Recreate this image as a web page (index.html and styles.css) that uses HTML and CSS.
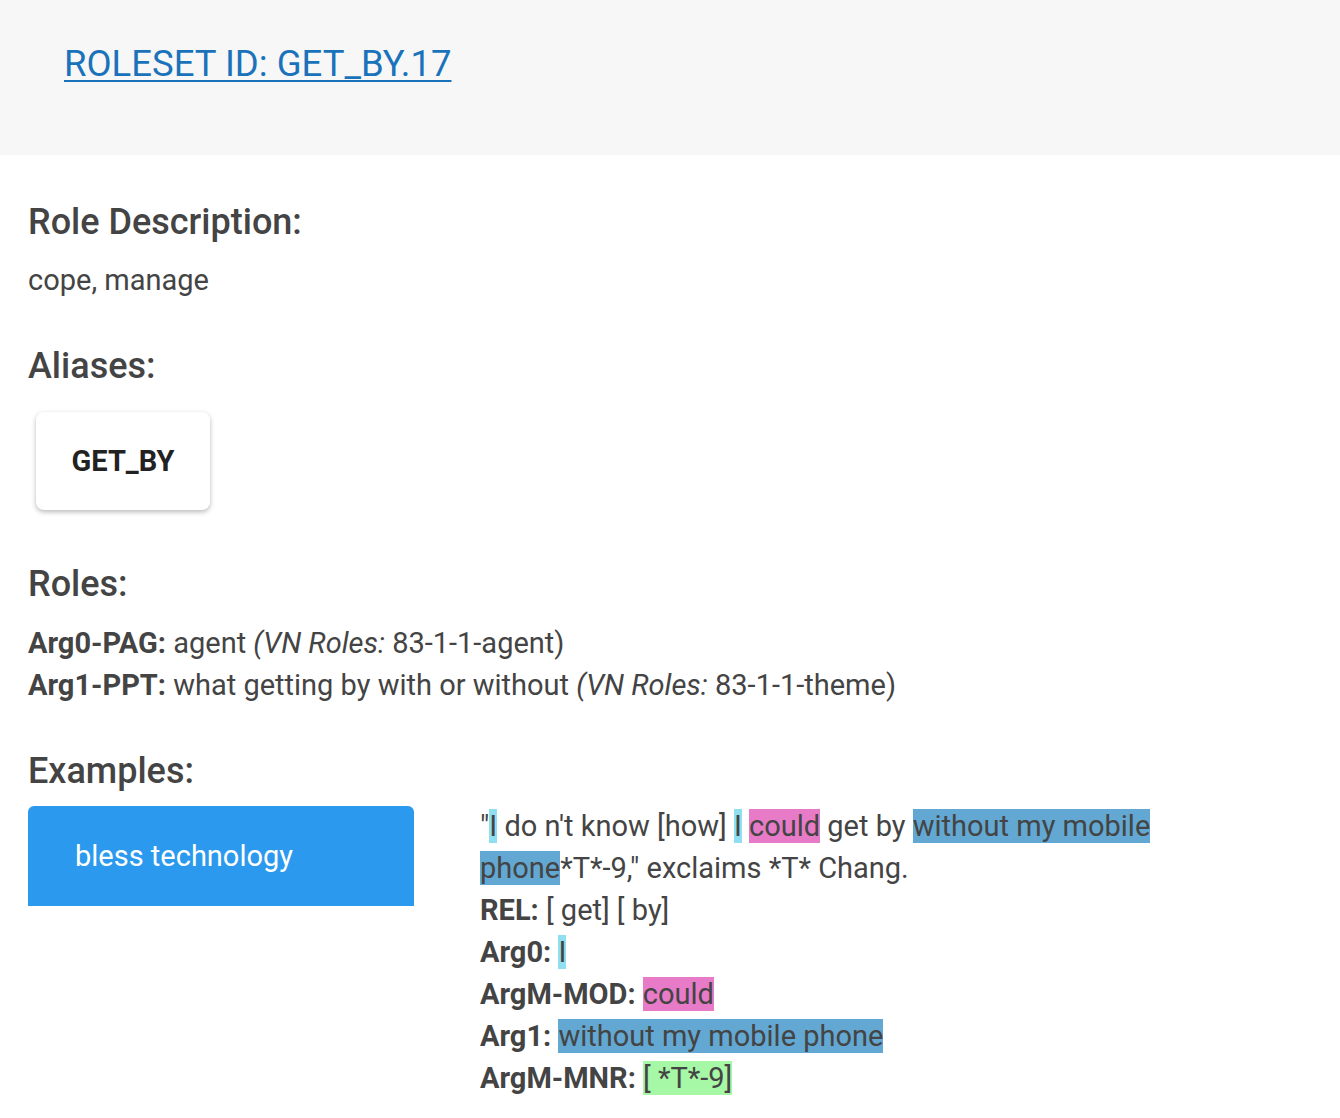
FILE: index.html
```html
<!DOCTYPE html>
<html>
<head>
<meta charset="utf-8">
<link rel="stylesheet" href="styles.css">
</head>
<body>
<header class="top">
  <a class="title" href="#">ROLESET ID: GET_BY.17</a>
</header>
<main class="content">
  <section class="section s-desc">
    <h2 class="heading">Role Description:</h2>
    <p class="text">cope, manage</p>
  </section>

  <section class="section s-alias">
    <h2 class="heading">Aliases:</h2>
    <div class="aliases">
      <div class="alias">GET_BY</div>
    </div>
  </section>

  <section class="section s-roles">
    <h2 class="heading">Roles:</h2>
    <div class="roles">
      <div class="line"><b>Arg0-PAG:</b> agent <i>(VN Roles:</i> 83-1-1-agent)</div>
      <div class="line"><b>Arg1-PPT:</b> what getting by with or without <i>(VN Roles:</i> 83-1-1-theme)</div>
    </div>
  </section>

  <section class="section s-examples">
    <h2 class="heading">Examples:</h2>
    <div class="examples">
      <div class="left">
        <div class="example-tab">bless technology</div>
      </div>
      <div class="right">
        <div class="line">"<span class="a0">I</span> do n't know [how] <span class="a0">I</span> <span class="mod">could</span> get by <span class="a1">without my mobile phone</span>*T*-9," exclaims *T* Chang.</div>
        <div class="line"><b>REL:</b> [ get] [ by]</div>
        <div class="line"><b>Arg0:</b> <span class="a0">I</span></div>
        <div class="line"><b>ArgM-MOD:</b> <span class="mod">could</span></div>
        <div class="line"><b>Arg1:</b> <span class="a1">without my mobile phone</span></div>
        <div class="line"><b>ArgM-MNR:</b> <span class="mnr">[ *T*-9]</span></div>
      </div>
    </div>
  </section>
</main>
</body>
</html>
```

FILE: styles.css
```css
html, body {
  margin: 0;
  padding: 0;
  background: #ffffff;
}
body {
  font-family: Roboto, "Noto Sans", sans-serif;
  color: #444444;
}
.top {
  background: #f7f7f7;
  height: 155px;
  box-sizing: border-box;
  padding: 40px 0 0 64px;
}
.title {
  font-size: 36.5px;
  line-height: 48px;
  color: #1a73ba;
  text-decoration: underline;
  text-decoration-thickness: 2px;
  text-underline-offset: 4px;
}
.content {
  padding: 0 28px 20px 28px;
}
.heading {
  font-size: 36px;
  font-weight: 500;
  margin: 0;
  line-height: 40px;
  color: #444;
}
.s-desc { padding-top: 47px; }
.s-alias { padding-top: 45px; }
.s-roles { padding-top: 54px; }
.s-examples { padding-top: 45px; }
.text {
  margin: 17px 0 0 0;
  font-size: 29px;
  line-height: 42px;
}
.aliases {
  padding: 26px 0 0 8px;
}
.alias {
  width: 174px;
  height: 98px;
  box-sizing: border-box;
  border-radius: 8px;
  background: #fff;
  box-shadow: 0 2px 5px rgba(0,0,0,0.28);
  display: flex;
  align-items: center;
  justify-content: center;
  font-weight: 700;
  font-size: 29px;
  color: #222;
}
.roles {
  margin-top: 18px;
}
.line {
  font-size: 29px;
  line-height: 42px;
}
.line b { font-weight: 700; }
.examples {
  display: flex;
  margin-top: 15px;
}
.left {
  width: 452px;
  flex: none;
}
.example-tab {
  width: 386px;
  height: 100px;
  box-sizing: border-box;
  background: #2b99ee;
  border-radius: 6px 6px 0 0;
  color: #fff;
  font-size: 29px;
  padding: 32px 0 0 47px;
  line-height: 36px;
}
.right {
  width: 720px;
  margin-top: -1px;
}
.a0 { background: #8fdff0; }
.mod { background: #e87bc8; }
.a1 { background: #62a8d2; }
.mnr { background: #a6f7a6; }
```
